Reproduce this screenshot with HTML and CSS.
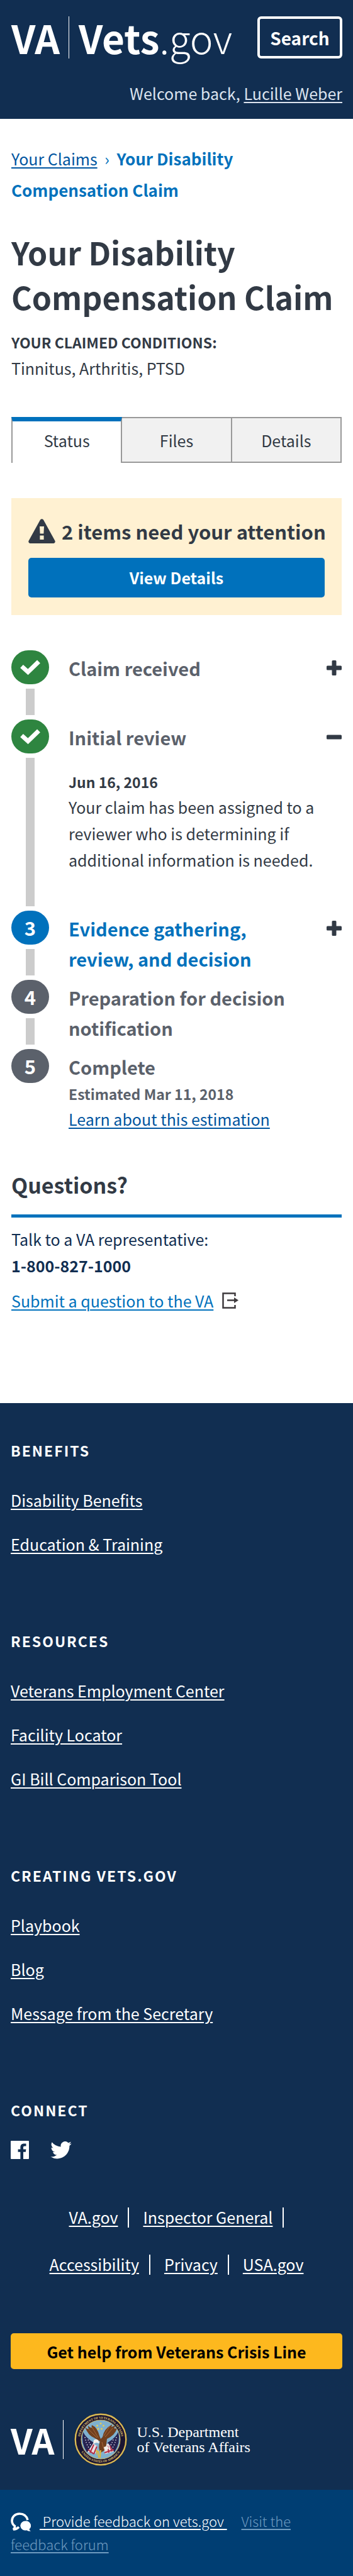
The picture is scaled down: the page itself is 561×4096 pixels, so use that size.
FILE: index.html
```html
<!DOCTYPE html>
<html lang="en">
<head>
<meta charset="utf-8">
<meta name="viewport" content="width=device-width, initial-scale=1">
<title>Your Disability Compensation Claim | Vets.gov</title>
<link rel="stylesheet" href="styles.css">
</head>
<body>
<header class="site-header">
  <div class="brand-row">
    <a class="brand" href="#" aria-label="VA Vets.gov">
      <span class="brand-va">VA</span>
      <span class="brand-rule"></span>
      <span class="brand-name">Vets<span class="brand-thin">.gov</span></span>
    </a>
    <button class="search-button" type="button">Search</button>
  </div>
  <p class="welcome">Welcome back, <a href="#">Lucille Weber</a></p>
</header>

<main class="page">
  <nav class="breadcrumb" aria-label="Breadcrumb">
    <a href="#">Your Claims</a> <span class="breadcrumb-sep">›</span> <strong>Your Disability Compensation Claim</strong>
  </nav>
  <h1>Your Disability Compensation Claim</h1>
  <h2 class="conditions-title">YOUR CLAIMED CONDITIONS:</h2>
  <p class="conditions">Tinnitus, Arthritis, PTSD</p>

  <div class="tabs" role="tablist">
    <button class="tab tab-current" type="button" role="tab" aria-selected="true">Status</button>
    <button class="tab" type="button" role="tab" aria-selected="false">Files</button>
    <button class="tab" type="button" role="tab" aria-selected="false">Details</button>
  </div>

  <section class="alert">
    <h2 class="alert-title">
      <svg class="alert-icon" viewBox="0 0 43 39" aria-hidden="true"><path fill="#323a45" fill-rule="evenodd" d="M19 1.4Q21.5-1 24 1.4L42.6 35.2Q43.2 38.4 40.4 39H2.6Q-.2 38.4.4 35.2ZM18 12l.6 11.500h5.800l.6-11.500zM18.400 26.500v6.500h6.200v-6.500z"/></svg>
      2 items need your attention
    </h2>
    <a class="alert-button" href="#">View Details</a>
  </section>

  <ol class="timeline">
    <li class="step">
      <div class="track"><span class="marker marker-done"><svg viewBox="0 0 32 25" width="32" height="25" aria-hidden="true"><path fill="none" stroke="#fff" stroke-width="7" d="M2.500 10.500 12.500 19.500 29.500 3"/></svg></span><span class="bar"></span></div>
      <div class="step-body"><h3>Claim received</h3></div>
      <button class="toggle" type="button" aria-label="Expand Claim received"><svg viewBox="0 0 24 24" aria-hidden="true"><path fill="#323a45" d="M10 0h4q1.500 0 1.500 1.500v7h7q1.500 0 1.500 1.500v4q0 1.500-1.500 1.500h-7v7q0 1.500-1.500 1.500h-4q-1.500 0-1.500-1.500v-7h-7q-1.500 0-1.500-1.500v-4q0-1.500 1.500-1.500h7v-7q0-1.500 1.500-1.500z"/></svg></button>
    </li>
    <li class="step step-open">
      <div class="track"><span class="marker marker-done"><svg viewBox="0 0 32 25" width="32" height="25" aria-hidden="true"><path fill="none" stroke="#fff" stroke-width="7" d="M2.500 10.500 12.500 19.500 29.500 3"/></svg></span><span class="bar"></span></div>
      <div class="step-body">
        <h3>Initial review</h3>
        <p class="date date-open">Jun 16, 2016</p>
        <p>Your claim has been assigned to a reviewer who is determining if additional information is needed.</p>
      </div>
      <button class="toggle" type="button" aria-label="Collapse Initial review"><svg viewBox="0 0 24 24" aria-hidden="true"><rect x="0" y="8.500" width="24" height="7" rx="1.500" fill="#323a45"/></svg></button>
    </li>
    <li class="step step-current">
      <div class="track"><span class="marker">3</span><span class="bar"></span></div>
      <div class="step-body"><h3>Evidence gathering, review, and decision</h3></div>
      <button class="toggle" type="button" aria-label="Expand Evidence gathering"><svg viewBox="0 0 24 24" aria-hidden="true"><path fill="#323a45" d="M10 0h4q1.500 0 1.500 1.500v7h7q1.500 0 1.500 1.500v4q0 1.500-1.500 1.500h-7v7q0 1.500-1.500 1.500h-4q-1.500 0-1.500-1.500v-7h-7q-1.500 0-1.500-1.500v-4q0-1.500 1.500-1.500h7v-7q0-1.500 1.500-1.500z"/></svg></button>
    </li>
    <li class="step">
      <div class="track"><span class="marker">4</span><span class="bar"></span></div>
      <div class="step-body"><h3>Preparation for decision notification</h3></div>
    </li>
    <li class="step step-last">
      <div class="track"><span class="marker">5</span></div>
      <div class="step-body">
        <h3>Complete</h3>
        <p class="date date-estimated">Estimated Mar 11, 2018</p>
        <p><a class="link" href="#">Learn about this estimation</a></p>
      </div>
    </li>
  </ol>

  <section class="questions">
    <h2 class="questions-title">Questions?</h2>
    <p>Talk to a VA representative:</p>
    <p><strong>1-800-827-1000</strong></p>
    <p class="submit"><a href="#">Submit a question to the VA</a>
      <svg class="exit-icon" viewBox="0 0 26 26" aria-hidden="true"><path fill="none" stroke="#3e3a3d" stroke-width="2.500" d="M20.500 6V1.500H1.500v23h19V20"/><path fill="none" stroke="#3e3a3d" stroke-width="2.500" d="M8 12.500h12"/><path fill="#3e3a3d" d="M19 8l7 4.500-7 4.500z"/></svg>
    </p>
  </section>
</main>

<footer class="site-footer">
  <section class="link-group">
    <h2>BENEFITS</h2>
    <ul>
      <li><a href="#">Disability Benefits</a></li>
      <li><a href="#">Education &amp; Training</a></li>
    </ul>
  </section>
  <section class="link-group">
    <h2>RESOURCES</h2>
    <ul>
      <li><a href="#">Veterans Employment Center</a></li>
      <li><a href="#">Facility Locator</a></li>
      <li><a href="#">GI Bill Comparison Tool</a></li>
    </ul>
  </section>
  <section class="link-group">
    <h2>CREATING VETS.GOV</h2>
    <ul>
      <li><a href="#">Playbook</a></li>
      <li><a href="#">Blog</a></li>
      <li><a href="#">Message from the Secretary</a></li>
    </ul>
  </section>
  <section class="connect">
    <h2>CONNECT</h2>
    <div class="social">
      <a href="#" aria-label="Facebook"><svg width="29" height="29" viewBox="0 0 29 29" aria-hidden="true"><path fill="#fff" d="M1 0h27q1 0 1 1v27q0 1-1 1h-8v-11.200h3.800l.6-4.400h-4.400v-2.800c0-1.300.4-2.100 2.200-2.100h2.300v-3.900a30 30 0 0 0-3.400-.2c-3.400 0-5.700 2.100-5.700 5.800v3.200h-3.800v4.400h3.800v11.200h-14.400q-1 0-1-1v-27q0-1 1-1z"/></svg></a>
      <a href="#" aria-label="Twitter"><svg width="34" height="28" viewBox="0 0 24 20" aria-hidden="true"><path fill="#fff" d="M24 2.370a9.800 9.800 0 0 1-2.830.78A4.940 4.940 0 0 0 23.340.42a9.900 9.900 0 0 1-3.130 1.200 4.920 4.920 0 0 0-8.390 4.490A13.980 13.980 0 0 1 1.670.96a4.930 4.930 0 0 0 1.520 6.580 4.900 4.900 0 0 1-2.230-.62v.06a4.930 4.930 0 0 0 3.950 4.830 4.900 4.900 0 0 1-2.220.08 4.930 4.930 0 0 0 4.600 3.420A9.880 9.880 0 0 1 0 17.350a13.940 13.940 0 0 0 7.550 2.210c9.050 0 14-7.500 14-13.990 0-.21 0-.42-.02-.64A10 10 0 0 0 24 2.370z"/></svg></a>
    </div>
  </section>
  <ul class="legal">
    <li><a href="#">VA.gov</a></li>
    <li><a href="#">Inspector General</a></li>
    <li><a href="#">Accessibility</a></li>
    <li><a href="#">Privacy</a></li>
    <li><a href="#">USA.gov</a></li>
  </ul>
  <button class="crisis" type="button">Get help from Veterans Crisis Line</button>
  <div class="department">
    <span class="department-va">VA</span>
    <span class="department-rule"></span>
    <svg class="seal" viewBox="0 0 84 84" role="img" aria-label="Seal of the Department of Veterans Affairs">
      <defs>
        <path id="arc-top" d="M11 53.300A33 33 0 1 1 73 53.300"/>
        <path id="arc-bottom" d="M5.500 42a36.500 36.500 0 0 0 73 0"/>
      </defs>
      <circle cx="42" cy="42" r="42" fill="#1b1532"/>
      <circle cx="42" cy="42" r="40.300" fill="none" stroke="#d9bb55" stroke-width="2.400"/>
      <circle cx="42" cy="42" r="31" fill="#7fb0cf" stroke="#cdb45c" stroke-width="1"/>
      <g class="seal-text">
        <text><textPath href="#arc-top" startOffset="50%" text-anchor="middle">DEPARTMENT OF VETERANS AFFAIRS</textPath></text>
        <text><textPath href="#arc-bottom" startOffset="50%" text-anchor="middle">UNITED STATES OF AMERICA</textPath></text>
      </g>
      <path fill="#262350" d="M14 30q5 10 17 17l-2 10-9 5q-10-15-6-32zM70 30q-5 10-17 17l2 10 9 5q10-15 6-32z"/>
      <path fill="none" stroke="#e9e4ea" stroke-width="1.400" stroke-dasharray="1.500 2.500" d="M17 38q2 12 7 18M22 42q3 8 6 12M67 38q-2 12-7 18M62 42q-3 8-6 12"/>
      <path fill="#e9e1e4" d="M30 48l7 5-3 11-13-2zM54 48l-8 5 3 12 14-4z"/>
      <path fill="none" stroke="#b52c45" stroke-width="2" d="M31 50l-6 13M36 53l-5 12M22 58l9 7M53 52l2 11M57 52l3 9M48 63l15-5"/>
      <path fill="#71401f" d="M41 45q-5-3-8-5-11-4-16-18 4 4 6 3-2-3-1-5 4 4 6 3-1-2 0-4 9 4 12 17l2 5 3-3q2-13 15-20 0 2-1 4 4-1 6-3 0 3-2 5 4 1 5 0-3 11-16 17l-2 17-8 5q-5-8-1-18z"/>
      <path fill="none" stroke="#a6693b" stroke-width="1" d="M23 26l13 13M28 22l10 17M61 24L49 38M56 21l-9 15M44 46l3 11"/>
      <path fill="#f5f1ec" d="M31 43q4-3 7 0l2 5-5-1-5 2zM47 54l6-2 2 5-7 2z"/>
      <path fill="#e0b73b" d="M37 60h2l1 11h-2zM41 59h2l-1 12h-2zM34 58l3 1-1 10z"/>
      <g fill="#e7cd53"><circle cx="42" cy="16.500" r="1.500"/><circle cx="36.500" cy="20" r="1.500"/><circle cx="46.500" cy="20" r="1.500"/><circle cx="38" cy="25" r="1.500"/><circle cx="43.500" cy="25" r="1.500"/></g>
    </svg>
    <span class="department-name">U.S. Department<br>of Veterans Affairs</span>
  </div>
</footer>
<aside class="feedback">
  <p><svg class="chat-icon" viewBox="0 0 32 30" aria-hidden="true"><path fill="none" stroke="#fff" stroke-width="3.600" d="M27 12C25 4.500 19.500 2 14 2 7 2 2 7 2 13q0 5.500 4.500 8.500Q7 25 4 27q6-.5 9-4"/><path fill="#fff" d="M24 13.500a8 7.500 0 0 1 5.500 13q0 2 2.500 3.300-4 .4-6.500-1.600A8 7.500 0 1 1 24 13.500z"/></svg><a class="feedback-main" href="#">&nbsp;Provide feedback on vets.gov&nbsp;</a> <a class="feedback-forum" href="#">Visit the feedback forum</a></p>
</aside>
</body>
</html>
```

FILE: styles.css
```css
* { box-sizing: border-box; }

body {
  margin: 0;
  background: #fff;
  color: #323a45;
  font-family: "Noto Sans CJK SC", "Noto Sans", sans-serif;
  font-size: 25px;
  line-height: 42px;
}

h1, h2, h3, p, ul, ol { margin: 0; padding: 0; }
ul, ol { list-style: none; }
svg { display: block; }
button { font: inherit; cursor: pointer; }
a { text-decoration-thickness: 2px; text-underline-offset: 3px; }

/* Header */
.site-header {
  padding: 26px 17px 23px 18px;
  background: #112e51;
  color: #dce4ef;
}
.brand-row { display: flex; justify-content: space-between; }
.brand {
  display: flex;
  align-items: center;
  color: #fff;
  text-decoration: none;
  line-height: 67px;
}
.brand-va { font-size: 62px; font-weight: 700; }
.brand-rule { width: 1px; height: 67px; margin: 0 15px 0 14px; background: #fff; }
.brand-name { font-size: 62px; font-weight: 700; }
.brand-thin { font-weight: 300; }
.search-button {
  width: 135px;
  height: 67px;
  padding: 0;
  border: 4px solid #fff;
  border-radius: 6px;
  background: transparent;
  color: #fff;
  font-size: 28px;
  font-weight: 700;
}
.welcome { margin-top: 37px; line-height: 36px; text-align: right; }
.welcome a { color: inherit; }

/* Claim page */
.page { padding: 38px 18px 142px; }
.breadcrumb { color: #0071bc; line-height: 50px; }
.breadcrumb a { color: #0055a0; }
.breadcrumb-sep { margin: 0 6px; }
.breadcrumb strong { font-size: 26px; }
h1 { margin-top: 38px; font-size: 50px; line-height: 71px; }
.conditions-title { margin-top: 21px; font-size: 23px; line-height: 32px; }
.conditions { margin-top: 4px; }

.tabs { display: flex; margin-top: 57px; }
.tab {
  flex: 1;
  height: 73px;
  padding: 0;
  border: 2px solid #999;
  border-left-width: 0;
  background: #f1f1f1;
  color: #323a45;
}
.tab-current {
  padding-bottom: 7px;
  border-top: 7px solid #0071bc;
  border-bottom: 0;
  border-left-width: 2px;
  background: #fff;
}

.alert { margin-top: 56px; padding: 33px 27px 28px; background: #fff1d2; }
.alert-title {
  display: flex;
  gap: 10px;
  font-size: 31px;
  line-height: 40px;
  white-space: nowrap;
}
.alert-icon { width: 43px; height: 39px; flex: none; }
.alert-button {
  display: block;
  margin-top: 22px;
  border-radius: 5px;
  background: #0071bc;
  color: #fff;
  font-weight: 700;
  line-height: 63px;
  text-align: center;
  text-decoration: none;
}

/* Timeline */
.timeline { margin-top: 56px; }
.step { display: flex; min-height: 110px; }
.track {
  display: flex;
  flex-direction: column;
  align-items: center;
  gap: 7px;
  flex: none;
  width: 60px;
  margin-right: 31px;
  padding-bottom: 7px;
}
.marker {
  display: flex;
  align-items: center;
  justify-content: center;
  width: 60px;
  height: 54px;
  border-radius: 27px;
  background: #5b616b;
  color: #fff;
  font-size: 31px;
  font-weight: 700;
}
.marker-done { background: #2e8540; }
.bar { flex: 1; width: 14px; background: #ccc; }
.step-body { flex: 1; padding: 4px 0 10px; }
.step-body h3 { padding-right: 32px; color: #5b616b; font-size: 29px; line-height: 48px; }
.step-open .step-body { padding-bottom: 60px; }
.step-current .marker { background: #0071bc; }
.step-current h3 { color: #0071bc; }
.step-last .step-body { padding-bottom: 0; }
.date { font-size: 23px; font-weight: 700; line-height: 38px; }
.date-open { margin-top: 28px; }
.date-estimated { color: #5b616b; }
.link { color: #0055a0; }
.toggle {
  flex: none;
  align-self: flex-start;
  width: 24px;
  height: 24px;
  margin-top: 16px;
  padding: 0;
  border: 0;
  background: none;
}

/* Questions */
.questions { margin-top: 62px; color: #112e51; }
.questions-title {
  margin-bottom: 13px;
  padding-bottom: 25px;
  border-bottom: 5px solid #0071bc;
  color: #323a45;
  font-size: 34px;
  line-height: 44px;
}
.submit { display: flex; align-items: center; gap: 14px; margin-top: 14px; }
.submit a { color: #0071bc; }
.exit-icon { width: 26px; height: 26px; }

/* Footer */
.site-footer { padding: 59px 17px 38px; background: #112e51; color: #fff; }
.site-footer a { color: #fff; }
.site-footer h2 { font-size: 23px; line-height: 32px; letter-spacing: 2px; }
.link-group { margin-bottom: 117px; }
.link-group ul { display: grid; gap: 28px; margin-top: 42px; }
.social { display: flex; align-items: center; gap: 34px; margin-top: 33px; }
.legal {
  display: flex;
  flex-wrap: wrap;
  justify-content: center;
  column-gap: 22px;
  margin: 55px 32px 72px;
  line-height: 75px;
}
.legal li { display: flex; align-items: center; }
.legal li:not(:last-child)::after {
  content: "";
  width: 2px;
  height: 32px;
  margin-left: 16px;
  background: #fff;
}
.crisis {
  display: block;
  width: 100%;
  height: 57px;
  padding: 0;
  border: 0;
  border-radius: 5px;
  background: #fdb81e;
  color: #000;
  font-weight: 700;
}
.department { display: flex; align-items: center; margin-top: 70px; }
.department-va { font-size: 56px; font-weight: 700; line-height: 62px; }
.department-rule { width: 1px; height: 62px; margin: 0 17px 0 13px; background: #fff; }
.seal { width: 84px; height: 84px; }
.seal-text { fill: #e2ca6e; font: 700 5px "Liberation Serif", serif; }
.department-name {
  margin-left: 16px;
  font: 24px/24px "Liberation Serif", serif;
}

/* Feedback */
.feedback { padding: 31px 17px 32px; background: #003e73; font-size: 22px; font-weight: 300; line-height: 37px; }
.chat-icon { display: inline-block; width: 32px; height: 30px; margin-right: 14px; vertical-align: -7px; }
.feedback-main { margin-right: 18px; color: #fff; }
.feedback-forum { color: #6f9bc0; }
```
